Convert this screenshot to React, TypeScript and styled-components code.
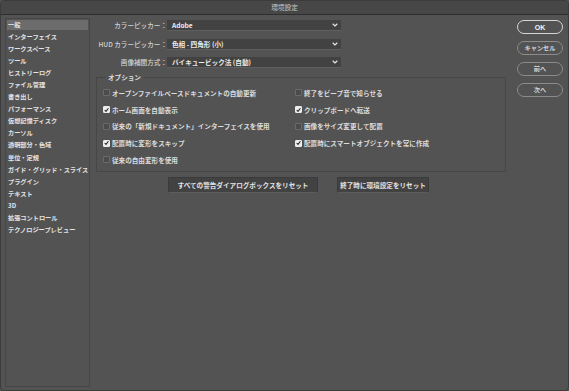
import React from "react";
import styled, { createGlobalStyle } from "styled-components";

const GlobalStyle = createGlobalStyle`
  html, body { margin: 0; padding: 0; background: #535353; }
  body { font-family: "Noto Sans CJK JP", "Noto Sans", sans-serif; }
  #root { width: 569px; height: 391px; }
  * { box-sizing: border-box; }
`;

const Window = styled.div`
  width: 569px;
  height: 391px;
  display: flex;
  flex-direction: column;
  background: #535353;
  border: 1px solid #3c3c3c;
  border-radius: 4px;
  overflow: hidden;
`;

const TitleBar = styled.div`
  height: 14px;
  flex: none;
  display: flex;
  align-items: center;
  justify-content: center;
  background: #474747;
  border-bottom: 1px solid #2e2e2e;
  color: #c9c9c9;
  font-size: 6.7px;
  line-height: 13px;
`;

const Main = styled.div`
  flex: 1;
  display: flex;
  padding: 3px 0 3px 4px;
  min-height: 0;
`;

const Sidebar = styled.ul`
  width: 85px;
  margin: 0;
  padding: 1px;
  list-style: none;
  border: 1px solid #464646;
  display: flex;
  flex-direction: column;
  gap: 2.06px;
`;

const SideItem = styled.li<{ $active?: boolean }>`
  height: 10px;
  padding-left: 1px;
  font-size: 6.2px;
  line-height: 10px;
  font-weight: 700;
  color: #e4e4e4;
  white-space: nowrap;
  background: ${(p) => (p.$active ? "#6c6c6c" : "transparent")};
`;

const Content = styled.div`
  flex: 1;
  display: flex;
  padding-top: 2px;
`;

const Form = styled.div`
  width: 416px;
  display: flex;
  flex-direction: column;
`;

const Settings = styled.div`
  display: grid;
  grid-template-columns: 77px 174px;
  grid-auto-rows: 11px;
  row-gap: 7.5px;
`;

const Label = styled.div`
  text-align: right;
  font-size: 6.6px;
  line-height: 11px;
  color: #d2d2d2;
  font-weight: 500;
  white-space: nowrap;
`;

const Select = styled.div`
  display: flex;
  align-items: center;
  justify-content: space-between;
  padding: 0 3px 0 5px;
  background: #424242;
  border-bottom: 1px solid #5f5f5f;
  font-size: 6.6px;
  font-weight: 700;
  color: #ececec;
  line-height: 10px;
  white-space: nowrap;
`;

const Group = styled.fieldset`
  margin: 5px 0 0 6px;
  width: 410px;
  min-width: 0;
  border: 1px solid #474747;
  padding: 3.6px 6px 3px 6px;
  display: flex;
`;

const Legend = styled.legend`
  margin-left: 3px;
  padding: 0 2px;
  font-size: 6.6px;
  line-height: 8px;
  font-weight: 700;
  color: #dedede;
`;

const OptionColumn = styled.div<{ $width?: number }>`
  display: flex;
  flex-direction: column;
  width: ${(p) => (p.$width ? `${p.$width}px` : "auto")};
  flex: ${(p) => (p.$width ? "none" : "1")};
`;

const OptionRow = styled.label`
  height: 16.75px;
  display: flex;
  align-items: center;
  gap: 2px;
  font-size: 6.6px;
  font-weight: 700;
  color: #dcdcdc;
  white-space: nowrap;
`;

const Box = styled.span<{ $checked?: boolean }>`
  width: 7px;
  height: 7px;
  flex: none;
  display: flex;
  align-items: center;
  justify-content: center;
  border-radius: 1px;
  background: ${(p) => (p.$checked ? "#ececec" : "#4b4b4b")};
  border: 1px solid ${(p) => (p.$checked ? "#ececec" : "#6a6a6a")};
`;

const ResetRow = styled.div`
  display: flex;
  gap: 19px;
  margin-top: 5px;
  padding-left: 78px;
`;

const ResetButton = styled.button<{ $w: number }>`
  width: ${(p) => p.$w}px;
  height: 16px;
  padding: 0;
  background: #424242;
  border: 1px solid #3b3b3b;
  border-bottom-color: #5c5c5c;
  border-radius: 1px;
  color: #e2e2e2;
  font-family: inherit;
  font-size: 6.6px;
  font-weight: 700;
  white-space: nowrap;
`;

const ButtonColumn = styled.div`
  width: 46px;
  margin-left: 11px;
  display: flex;
  flex-direction: column;
  gap: 7px;
`;

const PillButton = styled.button<{ $primary?: boolean }>`
  height: 14px;
  padding: 0;
  border-radius: 7px;
  background: #535353;
  border: ${(p) => (p.$primary ? "1.5px solid #d6d6d6" : "1px solid #8c8c8c")};
  color: ${(p) => (p.$primary ? "#f4f4f4" : "#d4d4d4")};
  font-family: ${(p) => (p.$primary ? '"Liberation Sans", Arial, sans-serif' : "inherit")};
  font-size: ${(p) => (p.$primary ? "7px" : "6.2px")};
  font-weight: 700;
  line-height: 1;
  white-space: nowrap;
`;

const Chevron = () => (
  <svg width="6" height="4" viewBox="0 0 6 4">
    <polyline points="0.7,0.8 3,3 5.3,0.8" fill="none" stroke="#e6e6e6" strokeWidth="1.2" />
  </svg>
);

const Check = () => (
  <svg width="6" height="6" viewBox="0 0 6 6">
    <polyline points="0.8,3 2.4,4.7 5.3,0.9" fill="none" stroke="#2a2a2a" strokeWidth="1.3" />
  </svg>
);

const sideItems = [
  "一般",
  "インターフェイス",
  "ワークスペース",
  "ツール",
  "ヒストリーログ",
  "ファイル管理",
  "書き出し",
  "パフォーマンス",
  "仮想記憶ディスク",
  "カーソル",
  "透明部分・色域",
  "単位・定規",
  "ガイド・グリッド・スライス",
  "プラグイン",
  "テキスト",
  "3D",
  "拡張コントロール",
  "テクノロジープレビュー",
];

const settings: [string, string][] = [
  ["カラーピッカー：", "Adobe"],
  ["HUD カラーピッカー：", "色相 - 四角形 (小)"],
  ["画像補間方式：", "バイキュービック法 (自動)"],
];

const leftOptions: [string, boolean][] = [
  ["オープンファイルベースドキュメントの自動更新", false],
  ["ホーム画面を自動表示", true],
  ["従来の「新規ドキュメント」インターフェイスを使用", false],
  ["配置時に変形をスキップ", true],
  ["従来の自由変形を使用", false],
];

const rightOptions: [string, boolean][] = [
  ["終了をビープ音で知らせる", false],
  ["クリップボードへ転送", true],
  ["画像をサイズ変更して配置", false],
  ["配置時にスマートオブジェクトを常に作成", true],
];

const Option = ({ text, checked }: { text: string; checked: boolean }) => (
  <OptionRow>
    <Box $checked={checked}>{checked && <Check />}</Box>
    {text}
  </OptionRow>
);

export default function App() {
  return (
    <>
      <GlobalStyle />
      <Window>
        <TitleBar>環境設定</TitleBar>
        <Main>
          <Sidebar>
            {sideItems.map((s, i) => (
              <SideItem key={s} $active={i === 0}>
                {s}
              </SideItem>
            ))}
          </Sidebar>
          <Content>
            <Form>
              <Settings>
                {settings.map(([l, v]) => (
                  <React.Fragment key={l}>
                    <Label>{l}</Label>
                    <Select>
                      <span>{v}</span>
                      <Chevron />
                    </Select>
                  </React.Fragment>
                ))}
              </Settings>
              <Group>
                <Legend>オプション</Legend>
                <OptionColumn $width={192}>
                  {leftOptions.map(([t, c]) => (
                    <Option key={t} text={t} checked={c} />
                  ))}
                </OptionColumn>
                <OptionColumn>
                  {rightOptions.map(([t, c]) => (
                    <Option key={t} text={t} checked={c} />
                  ))}
                </OptionColumn>
              </Group>
              <ResetRow>
                <ResetButton $w={150}>すべての警告ダイアログボックスをリセット</ResetButton>
                <ResetButton $w={92}>終了時に環境設定をリセット</ResetButton>
              </ResetRow>
            </Form>
            <ButtonColumn>
              <PillButton $primary>OK</PillButton>
              <PillButton>キャンセル</PillButton>
              <PillButton>前へ</PillButton>
              <PillButton>次へ</PillButton>
            </ButtonColumn>
          </Content>
        </Main>
      </Window>
    </>
  );
}
